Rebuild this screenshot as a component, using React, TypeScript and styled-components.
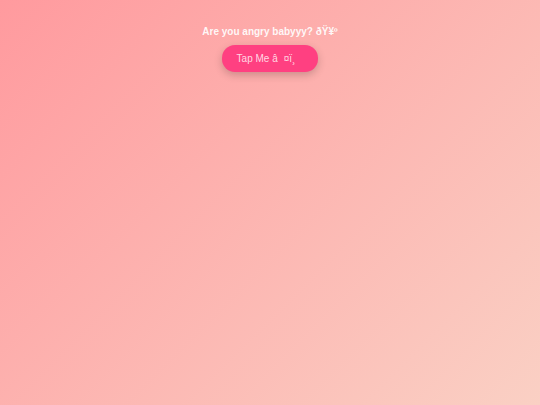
import styled, { createGlobalStyle } from "styled-components";

const GlobalStyle = createGlobalStyle`
  html, body {
    margin: 0;
    padding: 0;
    height: 100%;
  }

  #root {
    min-height: 100%;
  }
`;

const Page = styled.div`
  min-height: 100vh;
  background: linear-gradient(135deg, #ff9a9e 0%, #fad0c4 100%);
  display: flex;
  flex-direction: column;
  align-items: center;
  padding-top: 25px;
  box-sizing: border-box;
  font-family: "Liberation Sans", Arial, sans-serif;
`;

const Title = styled.h1`
  margin: 0 0 6px;
  font-size: 10px;
  font-weight: 700;
  color: rgba(255, 255, 255, 0.92);
  line-height: 14px;
`;

const TapButton = styled.button`
  height: 27px;
  padding: 0 15px;
  border: none;
  border-radius: 13px;
  background: #ff4081;
  color: rgba(255, 255, 255, 0.8);
  font-family: "Liberation Sans", Arial, sans-serif;
  font-size: 10px;
  box-shadow: 0 3px 8px rgba(0, 0, 0, 0.2);
  cursor: pointer;
`;

const App = () => {
  return (
    <>
      <GlobalStyle />
      <Page>
        <Title>Are you angry babyyy? ðŸ¥º</Title>
        <TapButton>Tap Me â{"\u009d"}¤ï¸{"\u008f"}</TapButton>
      </Page>
    </>
  );
};

export default App;
